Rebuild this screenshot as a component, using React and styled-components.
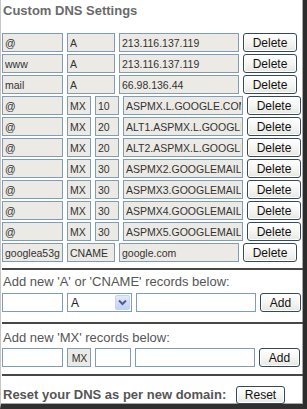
import React from "react";
import styled, { createGlobalStyle } from "styled-components";

const GlobalStyle = createGlobalStyle`
  html, body {
    margin: 0;
    padding: 0;
    background: #ffffff;
    font-family: "Liberation Sans", Arial, sans-serif;
  }
`;

const Frame = styled.div`
  width: 307px;
  height: 409px;
  box-sizing: border-box;
  background: #ffffff;
  border-left: 1px solid #c6c6c6;
  border-right: 4px solid #2c2c2c;
  border-bottom: 5px solid #303030;
  box-shadow: inset -1px -1px 0 #a8a8a8;
  overflow: hidden;
`;

const Title = styled.h2`
  margin: 0;
  padding: 3px 0 0 2px;
  height: 33px;
  box-sizing: border-box;
  font-size: 13px;
  line-height: 15px;
  font-weight: bold;
  color: #6a6a6a;
`;

const Records = styled.div`
  display: flex;
  flex-direction: column;
  gap: 2px;
  padding-left: 1px;
`;

const Row = styled.div`
  display: flex;
  align-items: center;
  gap: 4px;
  height: 19px;
`;

const Field = styled.input`
  width: ${(p) => p.$w}px;
  height: 19px;
  box-sizing: border-box;
  margin: 0;
  padding: 0 1px 0 2px;
  border: 1px solid #7f9db9;
  background: ${(p) => (p.$blank ? "#ffffff" : "#ebeae5")};
  color: #333333;
  font-family: "Liberation Sans", Arial, sans-serif;
  font-size: 10.5px;
  text-align: ${(p) => (p.$center ? "center" : "left")};
  outline: none;
`;

const Button = styled.button`
  width: ${(p) => p.$w}px;
  height: ${(p) => p.$h || 19}px;
  box-sizing: border-box;
  margin: 0;
  padding: 0;
  border: 1px solid #34495e;
  border-radius: 3px;
  background: linear-gradient(#ffffff 0%, #f5f5f2 50%, #e8e8e2 100%);
  box-shadow: inset 0 0 0 1px #ffffff;
  color: #111111;
  font-family: "Liberation Sans", Arial, sans-serif;
  font-size: 12px;
  line-height: 1;
`;

const Rule = styled.div`
  height: 2px;
  margin: ${(p) => p.$mt}px 0 0 1px;
  background: #474747;
`;

const Label = styled.div`
  margin-top: ${(p) => p.$mt}px;
  padding-left: 2px;
  height: 16px;
  font-size: 13px;
  line-height: 16px;
  color: #555555;
`;

const FormRow = styled(Row)`
  margin-top: ${(p) => p.$mt}px;
  padding-left: 1px;
`;

const Select = styled.div`
  width: ${(p) => p.$w}px;
  height: 19px;
  box-sizing: border-box;
  border: 1px solid #7f9db9;
  background: #ffffff;
  display: flex;
  align-items: center;
  justify-content: space-between;
  padding: 1px 1px 1px 3px;
  font-size: 12px;
  color: #222222;
`;

const Arrow = styled.span`
  width: 15px;
  height: 15px;
  box-sizing: border-box;
  border: 1px solid #c3d3fd;
  border-radius: 2px;
  background: linear-gradient(#e2eafe, #c0d0f8);
  display: flex;
  align-items: center;
  justify-content: center;
`;

const ResetRow = styled.div`
  display: flex;
  align-items: center;
  margin-top: 9px;
  padding-left: 2px;
  height: 19px;
`;

const ResetText = styled.span`
  font-size: 13px;
  font-weight: bold;
  color: #555555;
  width: 233px;
`;

const aRecords = [
  ["@", "A", "213.116.137.119"],
  ["www", "A", "213.116.137.119"],
  ["mail", "A", "66.98.136.44"],
];

const mxRecords = [
  ["10", "ASPMX.L.GOOGLE.COM"],
  ["20", "ALT1.ASPMX.L.GOOGLE.COM"],
  ["20", "ALT2.ASPMX.L.GOOGLE.COM"],
  ["30", "ASPMX2.GOOGLEMAIL.COM"],
  ["30", "ASPMX3.GOOGLEMAIL.COM"],
  ["30", "ASPMX4.GOOGLEMAIL.COM"],
  ["30", "ASPMX5.GOOGLEMAIL.COM"],
];

export default function App() {
  return (
    <>
      <GlobalStyle />
      <Frame>
        <Title>Custom DNS Settings</Title>
        <Records>
          {aRecords.map(([host, type, value], i) => (
            <Row key={"a" + i}>
              <Field $w={61} value={host} readOnly />
              <Field $w={48} value={type} readOnly />
              <Field $w={120} value={value} readOnly />
              <Button $w={54}>Delete</Button>
            </Row>
          ))}
          {mxRecords.map(([prio, value], i) => (
            <Row key={"mx" + i}>
              <Field $w={61} value="@" readOnly />
              <Field $w={24} value="MX" readOnly />
              <Field $w={24} value={prio} readOnly />
              <Field $w={120} value={value} readOnly />
              <Button $w={54}>Delete</Button>
            </Row>
          ))}
          <Row>
            <Field $w={61} value="googlea53g" readOnly />
            <Field $w={48} value="CNAME" readOnly />
            <Field $w={120} value="google.com" readOnly />
            <Button $w={54}>Delete</Button>
          </Row>
        </Records>

        <Rule $mt={6} />
        <Label $mt={4}>Add new 'A' or 'CNAME' records below:</Label>
        <FormRow $mt={3}>
          <Field $w={61} $blank />
          <Select $w={65}>
            <span>A</span>
            <Arrow>
              <svg width="9" height="7" viewBox="0 0 9 7">
                <path d="M1 1.5 L4.5 5 L8 1.5" fill="none" stroke="#4d6185" strokeWidth="2" />
              </svg>
            </Arrow>
          </Select>
          <Field $w={120} $blank />
          <Button $w={41}>Add</Button>
        </FormRow>

        <Rule $mt={10} />
        <Label $mt={6}>Add new 'MX' records below:</Label>
        <FormRow $mt={2}>
          <Field $w={61} $blank />
          <Field $w={24} value="MX" readOnly $center />
          <Field $w={36} $blank />
          <Field $w={120} $blank />
          <Button $w={41}>Add</Button>
        </FormRow>

        <Rule $mt={7} />
        <ResetRow>
          <ResetText>Reset your DNS as per new domain:</ResetText>
          <Button $w={49} $h={18}>Reset</Button>
        </ResetRow>
      </Frame>
    </>
  );
}
